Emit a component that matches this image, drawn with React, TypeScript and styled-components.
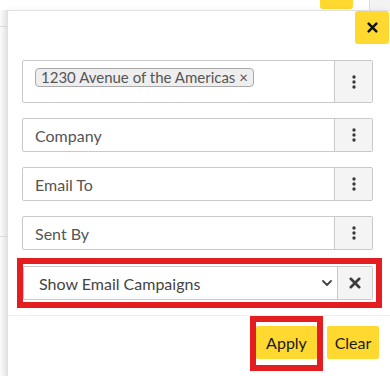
import React from 'react'
import styled, { createGlobalStyle } from 'styled-components'

const GlobalStyle = createGlobalStyle`
    html, body {
        margin: 0;
        padding: 0;
        background: #fff;
        overflow: hidden;
    }
    body {
        font-family: Lato, "Open Sans", Arial, sans-serif;
    }
`

const YELLOW = '#ffd92f'

const DotsIcon = () => (
    <svg width="4" height="14" viewBox="0 0 4 14">
        <circle cx="2" cy="2" r="1.7" fill="#3a3a3a" />
        <circle cx="2" cy="7" r="1.7" fill="#3a3a3a" />
        <circle cx="2" cy="12" r="1.7" fill="#3a3a3a" />
    </svg>
)

const CrossIcon = ({ size = 11, color = '#111' }: { size?: number, color?: string }) => (
    <svg width={size} height={size} viewBox="0 0 10 10">
        <path d="M1.5 1.5 L8.5 8.5 M8.5 1.5 L1.5 8.5" stroke={color} strokeWidth="2.2" strokeLinecap="round" />
    </svg>
)

const ChevronIcon = () => (
    <svg width="10" height="6" viewBox="0 0 10 6">
        <path d="M1 1 L5 5 L9 1" stroke="#444" strokeWidth="1.8" fill="none" strokeLinecap="round" strokeLinejoin="round" />
    </svg>
)

const FilterField = ({ label }: { label: string }) => (
    <FieldRow>
        <FieldInput>{label}</FieldInput>
        <FieldButton><DotsIcon /></FieldButton>
    </FieldRow>
)

const App = () => {
    return (
        <>
            <GlobalStyle />
            <Page>
                <TopStrip>
                    <YellowPeek />
                    <GreyPeek />
                </TopStrip>
                <LeftStrip>
                    <LeftRule />
                </LeftStrip>
                <Panel>
                    <PanelHeader>
                        <CloseButton aria-label="close"><CrossIcon /></CloseButton>
                    </PanelHeader>
                    <PanelBody>
                        <FieldRow tall>
                            <FieldInput tall>
                                <Tag>1230 Avenue of the Americas ×</Tag>
                            </FieldInput>
                            <FieldButton><DotsIcon /></FieldButton>
                        </FieldRow>
                        <FilterField label="Company" />
                        <FilterField label="Email To" />
                        <FilterField label="Sent By" />
                        <SelectHighlight>
                            <FieldRow>
                                <SelectBox>
                                    <span>Show Email Campaigns</span>
                                    <ChevronIcon />
                                </SelectBox>
                                <FieldButton wide><CrossIcon size={12} color="#3c3c3c" /></FieldButton>
                            </FieldRow>
                        </SelectHighlight>
                    </PanelBody>
                    <PanelFooter>
                        <ApplyHighlight>
                            <ActionButton width={61}>Apply</ActionButton>
                        </ApplyHighlight>
                        <ActionButton width={52} offset>Clear</ActionButton>
                    </PanelFooter>
                </Panel>
            </Page>
        </>
    )
}

const Page = styled.div`
    display: grid;
    grid-template-columns: 7px 1fr;
    grid-template-rows: 10px auto;
    width: 390px;
    height: 376px;
    overflow: hidden;
`

const TopStrip = styled.div`
    grid-column: 1 / 3;
    display: flex;
    align-items: flex-start;
    padding-left: 320px;
`

const YellowPeek = styled.div`
    width: 33px;
    height: 9px;
    background: ${YELLOW};
    border-radius: 0 0 3px 3px;
    margin-right: 16px;
`

const GreyPeek = styled.div`
    flex: 1;
    height: 10px;
    border-left: 1px solid #ddd;
    background: #f3f3f3;
`

const LeftStrip = styled.div`
    background: linear-gradient(to right, #fbfbfb, #ececec);
`

const LeftRule = styled.div`
    margin-top: 16px;
    height: 209px;
    border-top: 1px solid #dcdcdc;
    border-bottom: 1px solid #dcdcdc;
`

const Panel = styled.div`
    background: #fff;
    border-top: 1px solid #e0e0e0;
    border-left: 1px solid #e0e0e0;
    box-shadow: -2px 0 6px rgba(0, 0, 0, 0.06);
    display: flex;
    flex-direction: column;
    height: 366px;
`

const PanelHeader = styled.div`
    display: flex;
    justify-content: flex-end;
    padding-right: 1px;
`

const CloseButton = styled.button`
    width: 34px;
    height: 33px;
    border: none;
    border-radius: 3px;
    background: ${YELLOW};
    display: flex;
    align-items: center;
    justify-content: center;
    padding: 0;
`

const PanelBody = styled.div`
    display: flex;
    flex-direction: column;
    gap: 15px;
    padding: 16px 17px 7px 14px;
`

const FieldRow = styled.div<{ tall?: boolean }>`
    display: flex;
    height: ${p => p.tall ? 43 : 34}px;
    box-sizing: border-box;
    border: 1px solid #c9c9c9;
    border-radius: 2px;
`

const FieldInput = styled.div<{ tall?: boolean }>`
    flex: 1;
    display: flex;
    align-items: ${p => p.tall ? 'flex-start' : 'center'};
    padding: ${p => p.tall ? '7px 0 0 12px' : '0 0 0 12px'};
    font-size: 16px;
    color: #555;
`

const Tag = styled.span`
    display: inline-block;
    background: #eee;
    border: 1px solid #aaa;
    border-radius: 4px;
    padding: 0 5px;
    height: 19px;
    box-sizing: border-box;
    line-height: 17px;
    font-size: 15px;
    color: #555;
`

const FieldButton = styled.div<{ wide?: boolean }>`
    width: ${p => p.wide ? 34 : 37}px;
    background: #f4f4f4;
    border-left: 1px solid #c9c9c9;
    display: flex;
    align-items: center;
    justify-content: center;
`

const SelectHighlight = styled.div`
    margin: -7px -9px 0 -5px;
    border: 6px solid #e41e20;
    padding: 2px 3px 2px 0;
`

const SelectBox = styled.div`
    flex: 1;
    display: flex;
    align-items: center;
    justify-content: space-between;
    padding: 0 5px 0 15px;
    font-size: 16px;
    color: #444;
`

const PanelFooter = styled.div`
    display: flex;
    justify-content: flex-end;
    align-items: flex-start;
    gap: 4px;
    padding: 0 11px 0 0;
    border-top: 1px solid #eee;
`

const ApplyHighlight = styled.div`
    border: 6px solid #e41e20;
    padding: 4px 0 6px 0;
`

const ActionButton = styled.button<{ width: number, offset?: boolean }>`
    width: ${p => p.width}px;
    height: 33px;
    margin-top: ${p => p.offset ? 10 : 0}px;
    background: ${YELLOW};
    border: none;
    border-radius: 2px;
    padding: 0;
    font-family: Lato, "Open Sans", Arial, sans-serif;
    font-size: 16px;
    color: #1a1a1a;
`

export default App
